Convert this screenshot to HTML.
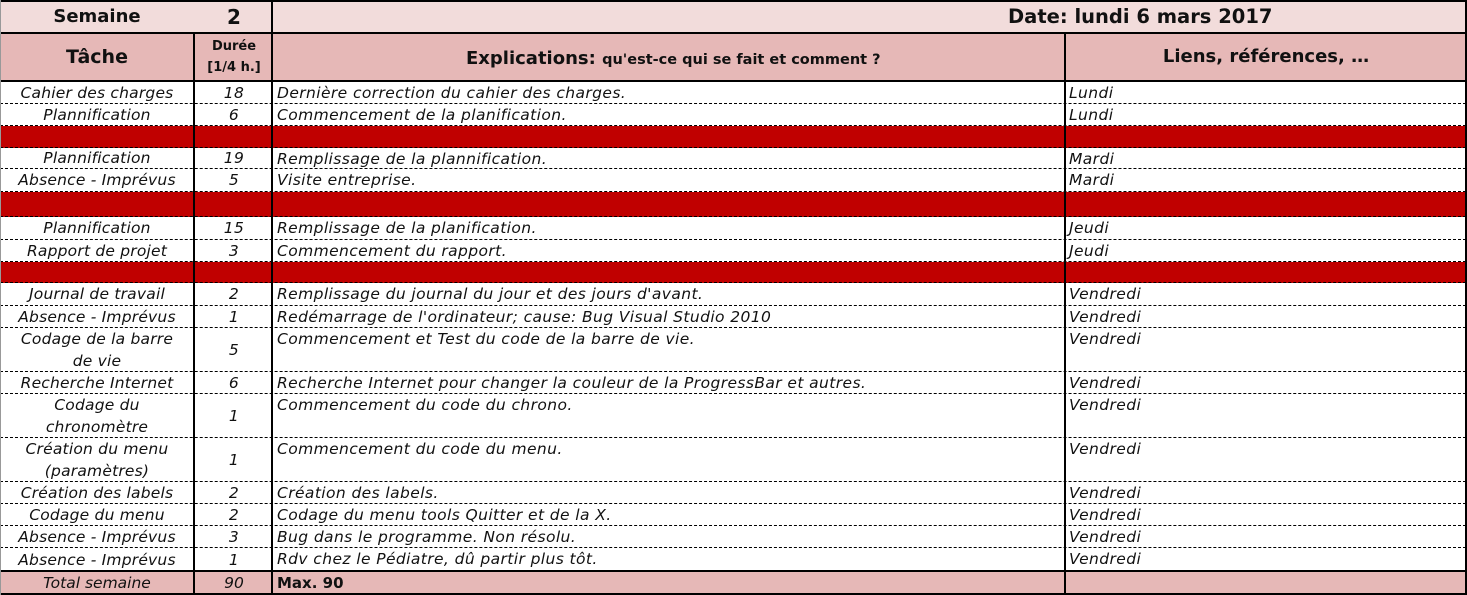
<!DOCTYPE html>
<html><head><meta charset="utf-8"><style>
*{margin:0;padding:0;box-sizing:border-box}
body{width:1467px;height:595px;background:#fff;position:relative;overflow:hidden;font-family:"DejaVu Sans","Liberation Sans",sans-serif;color:#111}
.a{position:absolute}
.r{position:absolute;left:0;width:1466px;border-bottom:1px dashed #000}
.c{position:absolute;top:0;height:100%;font-style:italic;font-size:15.5px;line-height:22px;white-space:nowrap;letter-spacing:0.4px}
.c1{left:0;width:194px;text-align:center;white-space:normal;display:flex;align-items:center;justify-content:center;letter-spacing:0.2px}
.c2{left:196px;width:76px;text-align:center;display:flex;align-items:center;justify-content:center}
.c3{left:277px}
.c4{left:1069px}
.red{background:#c00000}
.v{position:absolute;width:2px;background:#000}
.h{position:absolute;left:0;width:1467px;height:2px;background:#000}
</style></head><body>
<div class="a" style="left:0;top:0;width:1466px;height:33px;background:#f2dcdb"></div>
<div class="a" style="left:0;top:34px;width:1466px;height:47px;background:#e6b8b7"></div>
<div class="a" style="left:0;top:571px;width:1466px;height:24px;background:#e6b8b7"></div>
<div class="a" style="left:0;top:6px;width:194px;text-align:center;font-weight:bold;font-size:18px">Semaine</div>
<div class="a" style="left:196px;top:5px;width:76px;text-align:center;font-weight:bold;font-size:20px">2</div>
<div class="a" style="left:1008px;top:5px;font-weight:bold;font-size:19.5px">Date: lundi 6 mars 2017</div>
<div class="a" style="left:0;top:46px;width:194px;text-align:center;font-weight:bold;font-size:19px">Tâche</div>
<div class="a" style="left:196px;top:36px;width:76px;text-align:center;font-weight:bold;font-size:13px;line-height:21px">Durée<br>[1/4 h.]</div>
<div class="a" style="left:466px;top:48px;font-weight:bold;font-size:18px">Explications: <span style="font-size:14.5px">qu'est-ce qui se fait et comment ?</span></div>
<div class="a" style="left:1066px;top:46px;width:400px;text-align:center;font-weight:bold;font-size:18px">Liens, références, …</div>

<div class="r" style="top:82px;height:22px"><div class="c c1">Cahier des charges</div><div class="c c2">18</div><div class="c c3">Dernière correction du cahier des charges.</div><div class="c c4">Lundi</div></div>
<div class="r" style="top:104px;height:22px"><div class="c c1">Plannification</div><div class="c c2">6</div><div class="c c3">Commencement de la planification.</div><div class="c c4">Lundi</div></div>
<div class="r red" style="top:126px;height:22px"></div>
<div class="r" style="top:148px;height:21px"><div class="c c1">Plannification</div><div class="c c2">19</div><div class="c c3">Remplissage de la plannification.</div><div class="c c4">Mardi</div></div>
<div class="r" style="top:169px;height:23px"><div class="c c1">Absence - Imprévus</div><div class="c c2">5</div><div class="c c3">Visite entreprise.</div><div class="c c4">Mardi</div></div>
<div class="r red" style="top:192px;height:25px"></div>
<div class="r" style="top:217px;height:23px"><div class="c c1">Plannification</div><div class="c c2">15</div><div class="c c3">Remplissage de la planification.</div><div class="c c4">Jeudi</div></div>
<div class="r" style="top:240px;height:22px"><div class="c c1">Rapport de projet</div><div class="c c2">3</div><div class="c c3">Commencement du rapport.</div><div class="c c4">Jeudi</div></div>
<div class="r red" style="top:262px;height:21px"></div>
<div class="r" style="top:283px;height:23px"><div class="c c1">Journal de travail</div><div class="c c2">2</div><div class="c c3">Remplissage du journal du jour et des jours d'avant.</div><div class="c c4">Vendredi</div></div>
<div class="r" style="top:306px;height:22px"><div class="c c1">Absence - Imprévus</div><div class="c c2">1</div><div class="c c3">Redémarrage de l'ordinateur; cause: Bug Visual Studio 2010</div><div class="c c4">Vendredi</div></div>
<div class="r" style="top:328px;height:44px"><div class="c c1">Codage de la barre<br>de vie</div><div class="c c2">5</div><div class="c c3">Commencement et Test du code de la barre de vie.</div><div class="c c4">Vendredi</div></div>
<div class="r" style="top:372px;height:22px"><div class="c c1">Recherche Internet</div><div class="c c2">6</div><div class="c c3">Recherche Internet pour changer la couleur de la ProgressBar et autres.</div><div class="c c4">Vendredi</div></div>
<div class="r" style="top:394px;height:44px"><div class="c c1">Codage du<br>chronomètre</div><div class="c c2">1</div><div class="c c3">Commencement du code du chrono.</div><div class="c c4">Vendredi</div></div>
<div class="r" style="top:438px;height:44px"><div class="c c1">Création du menu<br>(paramètres)</div><div class="c c2">1</div><div class="c c3">Commencement du code du menu.</div><div class="c c4">Vendredi</div></div>
<div class="r" style="top:482px;height:22px"><div class="c c1">Création des labels</div><div class="c c2">2</div><div class="c c3">Création des labels.</div><div class="c c4">Vendredi</div></div>
<div class="r" style="top:504px;height:22px"><div class="c c1">Codage du menu</div><div class="c c2">2</div><div class="c c3">Codage du menu tools Quitter et de la X.</div><div class="c c4">Vendredi</div></div>
<div class="r" style="top:526px;height:22px"><div class="c c1">Absence - Imprévus</div><div class="c c2">3</div><div class="c c3">Bug dans le programme. Non résolu.</div><div class="c c4">Vendredi</div></div>
<div class="r" style="top:548px;height:23px;border:none"><div class="c c1">Absence - Imprévus</div><div class="c c2">1</div><div class="c c3">Rdv chez le Pédiatre, dû partir plus tôt.</div><div class="c c4">Vendredi</div></div>
<div class="a" style="top:572px;left:0;width:194px;height:22px;font-style:italic;font-size:15.5px;line-height:22px;text-align:center">Total semaine</div>
<div class="a" style="top:572px;left:196px;width:76px;height:22px;font-style:italic;font-size:15.5px;line-height:22px;text-align:center">90</div>
<div class="a" style="top:572px;left:277px;font-weight:bold;font-size:15px;line-height:22px">Max. 90</div>

<div class="h" style="top:0"></div>
<div class="h" style="top:32px"></div>
<div class="h" style="top:80px"></div>
<div class="h" style="top:570px"></div>
<div class="h" style="top:593px"></div>
<div class="v" style="left:0;top:0;height:595px;width:1px;background:#999"></div>
<div class="v" style="left:193px;top:33px;height:562px"></div>
<div class="v" style="left:271px;top:0;height:595px"></div>
<div class="v" style="left:1064px;top:33px;height:562px"></div>
<div class="v" style="left:1465px;top:0;height:595px"></div>
</body></html>
